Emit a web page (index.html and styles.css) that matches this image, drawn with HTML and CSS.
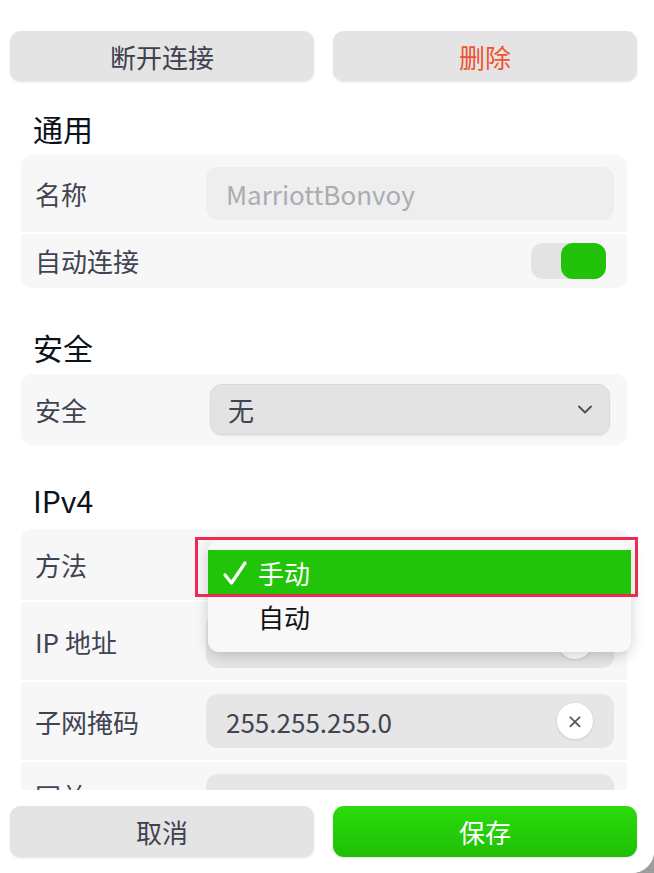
FILE: index.html
```html
<!DOCTYPE html>
<html lang="zh-CN">
<head>
<meta charset="utf-8">
<link rel="stylesheet" href="styles.css">
</head>
<body>
<div class="page">
  <div class="scroll">
    <div class="btn-row">
      <button class="btn">断开连接</button>
      <button class="btn danger">删除</button>
    </div>

    <section class="section">
      <h2 class="heading">通用</h2>
      <div class="card">
        <div class="row">
          <span class="label">名称</span>
          <div class="input disabled"><span class="placeholder">MarriottBonvoy</span></div>
        </div>
        <div class="row row-switch">
          <span class="label">自动连接</span>
          <div class="switch"><span class="knob"></span></div>
        </div>
      </div>
    </section>

    <section class="section">
      <h2 class="heading">安全</h2>
      <div class="card">
        <div class="row row-select">
          <span class="label">安全</span>
          <div class="select">
            <span class="value">无</span>
            <svg class="chevron" width="14" height="9" viewBox="0 0 14 9"><path d="M1 1.5 L7 7.5 L13 1.5" fill="none" stroke="#4a4d57" stroke-width="1.8" stroke-linecap="round" stroke-linejoin="round"/></svg>
          </div>
        </div>
      </div>
    </section>

    <section class="section">
      <h2 class="heading latin">IPv4</h2>
      <div class="card">
        <div class="row row-select method">
          <span class="label">方法</span>
          <div class="select"><span class="value">手动</span></div>
          <div class="menu">
            <div class="menu-item active">
              <svg class="check" width="26" height="26" viewBox="0 0 26 26"><path d="M3 15 L9.5 23 L23 3" fill="none" stroke="#ffffff" stroke-width="3.2" stroke-linecap="round" stroke-linejoin="round"/></svg>
              手动
            </div>
            <div class="menu-item">自动</div>
          </div>
          <div class="highlight"></div>
        </div>
        <div class="row">
          <span class="label">IP 地址</span>
          <div class="input"><span class="clear">×</span></div>
        </div>
        <div class="row">
          <span class="label">子网掩码</span>
          <div class="input"><span class="value">255.255.255.0</span><span class="clear">×</span></div>
        </div>
        <div class="row gateway">
          <span class="label">网关</span>
          <div class="input"></div>
        </div>
      </div>
    </section>
  </div>

  <div class="footer">
    <button class="btn">取消</button>
    <button class="btn primary">保存</button>
  </div>
</div>
</body>
</html>
```

FILE: styles.css
```css
* { box-sizing: border-box; }
html {
  margin: 0;
  background: #9d9d9d;
  overflow: hidden;
}
body {
  margin: 0;
  font-family: "Noto Sans CJK SC", "Noto Sans", sans-serif;
  color: #404452;
}
.page {
  width: 654px;
  height: 873px;
  background: #ffffff;
  border-bottom-right-radius: 22px;
  display: flex;
  flex-direction: column;
  overflow: hidden;
}
.scroll {
  flex: 1;
  overflow: hidden;
  padding: 31px 17px 0 10px;
}
.btn-row, .footer {
  display: grid;
  grid-template-columns: 1fr 1fr;
  column-gap: 19px;
}
.footer {
  height: 83px;
  padding: 16px 17px 0 10px;
  background: #fff;
}
.btn {
  height: 50px;
  border: none;
  border-radius: 11px;
  background: #e4e4e4;
  box-shadow: 0 1px 2px rgba(0,0,0,0.12);
  font-family: inherit;
  font-size: 26px;
  color: #3e4250;
  padding: 0;
}
.footer .btn { height: 51px; }
.btn.danger { color: #f0542f; }
.btn.primary {
  background: linear-gradient(#2bdc0b, #1fbf06);
  color: #fff;
}
.section {
  margin: 0 10px 0 11px;
}
.heading {
  margin: 0;
  padding-left: 12px;
  font-size: 30px;
  font-weight: 400;
  color: #0a121a;
  line-height: 38px;
}
.section:nth-of-type(1) .heading { margin-top: 28px; margin-bottom: 8px; }
.section:nth-of-type(2) .heading { margin-top: 40px; margin-bottom: 8px; }
.section:nth-of-type(3) .heading { margin-top: 36px; margin-bottom: 10px; }
.card {
  background: #f7f7f7;
  border-radius: 11px;
  display: flex;
  flex-direction: column;
  gap: 2px;
}
.card > .row + .row { box-shadow: 0 -2px 0 #ffffff; }
.row {
  display: grid;
  grid-template-columns: 171px 1fr;
  align-items: center;
  padding: 12px 13px 12px 14px;
  position: relative;
}
.label {
  font-size: 26px;
  color: #404452;
  white-space: nowrap;
}
.gateway .label { align-self: start; padding-top: 3px; }
.input {
  height: 54px;
  border-radius: 12px;
  background: #e6e6e6;
  display: flex;
  align-items: center;
  padding: 0 20px;
  font-size: 26px;
  position: relative;
}
.input.disabled { background: #eeeeef; height: 53px; }
.placeholder { color: #a9acb1; }
.input .value { color: #404452; }
.clear {
  position: absolute;
  right: 21px;
  top: 9px;
  width: 36px;
  height: 36px;
  border-radius: 50%;
  background: #fff;
  box-shadow: 0 1px 3px rgba(0,0,0,0.12);
  display: flex;
  align-items: center;
  justify-content: center;
  font-family: "DejaVu Sans", sans-serif;
  font-size: 20px;
  color: #555;
}
.row-switch {
  padding-top: 8px;
  padding-bottom: 9px;
}
.switch {
  justify-self: end;
  margin-right: 8px;
  width: 75px;
  height: 36px;
  border-radius: 12px;
  background: #e3e3e3;
  position: relative;
}
.knob {
  position: absolute;
  right: 0;
  top: 0;
  width: 45px;
  height: 36px;
  border-radius: 12px;
  background: #22c10a;
}
.row-select { padding-top: 10px; padding-bottom: 10px; }
.select {
  margin: 0 4px;
  height: 51px;
  border-radius: 12px;
  background: #e3e3e3;
  border: 1px solid #d9d9d9;
  box-shadow: 0 1px 2px rgba(0,0,0,0.08);
  display: flex;
  align-items: center;
  justify-content: space-between;
  padding: 0 17px 0 17px;
  font-size: 26px;
  color: #404452;
}
.method .select { visibility: hidden; }
.menu {
  position: absolute;
  left: 187px;
  top: 11px;
  width: 423px;
  height: 112px;
  background: #f8f8f8;
  border-radius: 11px;
  box-shadow: 0 4px 14px rgba(0,0,0,0.18);
  padding-top: 10px;
  z-index: 2;
}
.menu-item {
  height: 44px;
  display: flex;
  align-items: center;
  padding-left: 50px;
  font-size: 26px;
  color: #111;
  position: relative;
}
.menu-item.active {
  background: #22c40a;
  color: #fff;
}
.check {
  position: absolute;
  left: 14px;
  top: 10px;
}
.highlight {
  position: absolute;
  left: 174px;
  top: 8px;
  width: 443px;
  height: 60px;
  border: 3px solid #ef2a52;
  z-index: 3;
}
```
